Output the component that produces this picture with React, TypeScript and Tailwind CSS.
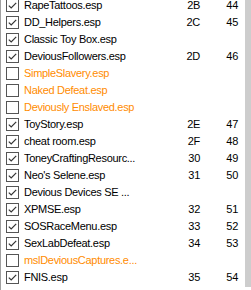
type Row = {
  name: string;
  on: boolean;
  idx?: string;
  num?: string;
};

const rows: Row[] = [
  { name: "RapeTattoos.esp", on: true, idx: "2B", num: "44" },
  { name: "DD_Helpers.esp", on: true, idx: "2C", num: "45" },
  { name: "Classic Toy Box.esp", on: true },
  { name: "DeviousFollowers.esp", on: true, idx: "2D", num: "46" },
  { name: "SimpleSlavery.esp", on: false },
  { name: "Naked Defeat.esp", on: false },
  { name: "Deviously Enslaved.esp", on: false },
  { name: "ToyStory.esp", on: true, idx: "2E", num: "47" },
  { name: "cheat room.esp", on: true, idx: "2F", num: "48" },
  { name: "ToneyCraftingResourc...", on: true, idx: "30", num: "49" },
  { name: "Neo's Selene.esp", on: true, idx: "31", num: "50" },
  { name: "Devious Devices SE ...", on: true },
  { name: "XPMSE.esp", on: true, idx: "32", num: "51" },
  { name: "SOSRaceMenu.esp", on: true, idx: "33", num: "52" },
  { name: "SexLabDefeat.esp", on: true, idx: "34", num: "53" },
  { name: "mslDeviousCaptures.e...", on: false },
  { name: "FNIS.esp", on: true, idx: "35", num: "54" },
];

const Check = ({ on }: { on: boolean }) => (
  <svg width="13" height="13" viewBox="0 0 13 13" className="shrink-0">
    <rect x="0.5" y="0.5" width="12" height="12" fill="#fff" stroke="#555" />
    {on && (
      <polyline
        points="2.8,6.6 5.2,9 10.2,3.8"
        fill="none"
        stroke="#333"
        strokeWidth="1.2"
      />
    )}
  </svg>
);

export default function App() {
  return (
    <div className="flex h-[290px] w-[251px] overflow-hidden border-l border-[#a0a0a0] bg-white font-['Liberation_Sans',Arial,sans-serif] text-[11px] tracking-[-0.3px] text-black">
      <div className="flex-1 overflow-hidden">
        <div className="-mt-[3px] flex flex-col">
          {rows.map((r) => (
            <div key={r.name} className="flex h-[17px] items-center pl-[5px]">
              <Check on={r.on} />
              <span
                className={`ml-[5px] w-[136px] whitespace-nowrap ${
                  r.on ? "text-black" : "text-[#ff8c00]"
                }`}
              >
                {r.name}
              </span>
              <span className="w-[40px] text-right">{r.idx}</span>
              <span className="w-[38px] text-right">{r.num}</span>
            </div>
          ))}
        </div>
      </div>
      <div className="flex w-[6px] flex-col">
        <div className="h-[287px] bg-[#cdcdcd]" />
      </div>
    </div>
  );
}
